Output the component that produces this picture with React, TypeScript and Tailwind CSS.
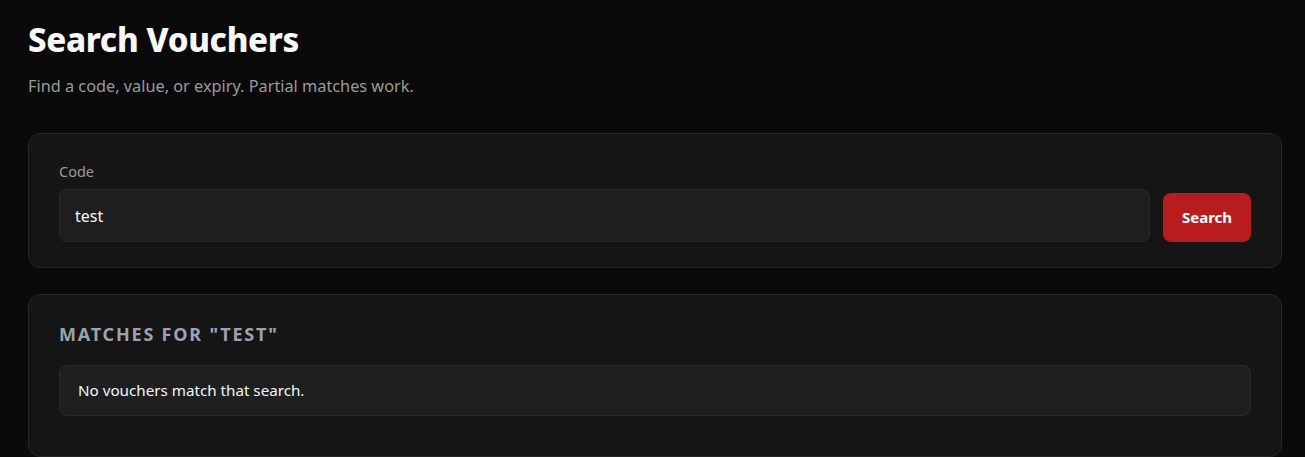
import { useState } from 'react';

export default function App() {
  const [code, setCode] = useState('test');
  const query = 'test';

  return (
    <main
      className="min-h-screen bg-[#0a0a0a] pt-5 pr-[23px] pb-10 pl-7 text-[#f5f5f5]"
      style={{ fontFamily: '"Noto Sans", "Open Sans", sans-serif' }}
    >
      <header>
        <h1 className="text-[33px] leading-[40px] font-extrabold tracking-[-0.01em] text-[#f8f8f8]">Search Vouchers</h1>
        <p className="mt-[14px] text-[16.3px] leading-6 text-[#9a9a9a]">Find a code, value, or expiry. Partial matches work.</p>
      </header>

      <section className="mt-[35px] rounded-xl border border-[#262626] bg-[#151515] px-[30px] pt-[26px] pb-[25px]">
        <form className="flex items-end gap-[13px]" onSubmit={(e) => e.preventDefault()}>
          <label className="flex-1">
            <span className="block text-[14.5px] leading-[22px] text-[#9a9a9a]">Code</span>
            <input
              className="mt-[7px] block h-[53px] w-full rounded-lg border border-[#2a2a2a] bg-[#1e1e1e] px-[15px] text-[16px] text-[#f5f5f5] outline-none"
              value={code}
              onChange={(e) => setCode(e.target.value)}
            />
          </label>
          <button className="h-[49px] w-[88px] rounded-lg bg-[#b91c1c] text-[15px] font-bold text-white">Search</button>
        </form>
      </section>

      <section className="mt-[26px] rounded-xl border border-[#262626] bg-[#151515] px-[30px] pt-6 pb-10">
        <h2 className="text-[18px] leading-[30px] font-bold tracking-[0.1em] text-[#9ca3af] uppercase">
          Matches for "{query}"
        </h2>
        <div className="mt-4 rounded-lg border border-[#2a2a2a] bg-[#1e1f21] px-[18px] py-[13px] text-[15.2px] leading-[23px] text-[#f5f5f5]">
          No vouchers match that search.
        </div>
      </section>
    </main>
  );
}
